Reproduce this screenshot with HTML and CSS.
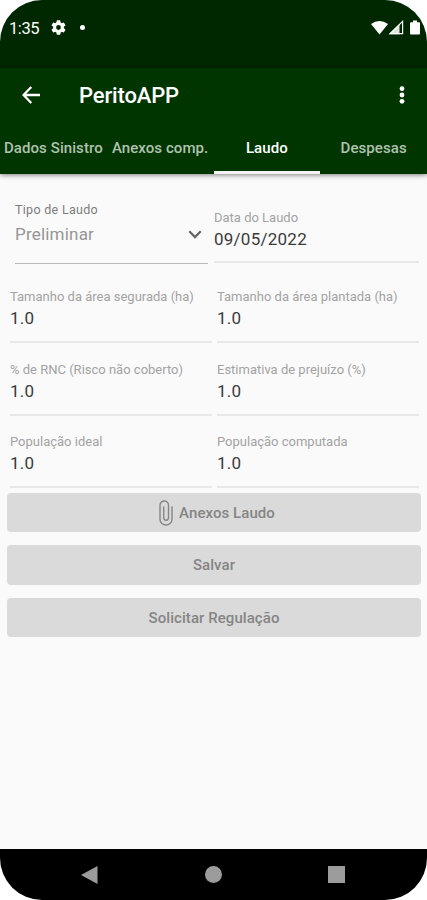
FILE: index.html
```html
<!DOCTYPE html>
<html lang="pt-BR">
<head>
<meta charset="utf-8">
<title>PeritoAPP</title>
<link rel="stylesheet" href="styles.css">
</head>
<body>
<div class="phone">
  <header class="status">
    <span class="clock">1:35</span>
    <svg class="gear" width="15" height="15" viewBox="2 2 20 20"><path fill="#fff" d="M19.14 12.94c.04-.3.06-.61.06-.94s-.02-.64-.07-.94l2.03-1.58a.49.49 0 0 0 .12-.61l-1.92-3.32a.49.49 0 0 0-.59-.22l-2.39.96a7 7 0 0 0-1.62-.94l-.36-2.54a.48.48 0 0 0-.48-.41h-3.84a.48.48 0 0 0-.47.41l-.36 2.54a7 7 0 0 0-1.62.94l-2.39-.96a.49.49 0 0 0-.59.22L2.74 8.87a.48.48 0 0 0 .12.61l2.03 1.58a6 6 0 0 0 0 1.88l-2.03 1.58a.49.49 0 0 0-.12.61l1.92 3.32c.12.22.37.29.59.22l2.39-.96c.5.38 1.03.7 1.62.94l.36 2.54c.05.24.24.41.48.41h3.84c.24 0 .44-.17.47-.41l.36-2.54a7 7 0 0 0 1.62-.94l2.39.96c.22.08.47 0 .59-.22l1.92-3.32a.48.48 0 0 0-.12-.61zM12 15.2a3.2 3.2 0 1 1 0-6.4 3.2 3.2 0 0 1 0 6.4z"/></svg>
    <span class="dot"></span>
    <svg class="signals" width="50" height="16" viewBox="0 0 50 16">
      <path fill="#fff" d="M0 4Q8.5-2 17 4L8.5 14.5z"/>
      <path fill="#dfe5df" d="M18 14.3 28.5 4v10.3z"/>
      <path fill="none" stroke="#fff" stroke-width="1.2" d="M19 13.7 31.6 1.4v12.3z"/>
      <path fill="#fff" d="M40 2.2h2V.4h4v1.8h2q1 0 1 1v10.3q0 1-1 1h-8q-1 0-1-1V3.2q0-1 1-1z"/>
    </svg>
  </header>
  <div class="appbar">
    <div class="toolbar">
      <svg width="18" height="18" viewBox="0 0 18 18"><path fill="none" stroke="#fff" stroke-width="2.3" d="M18 9H1.7M9.3 1 1.5 9l7.8 8"/></svg>
      <h1 class="title">PeritoAPP</h1>
      <svg class="more" width="6" height="20" viewBox="0 0 6 20"><g fill="#fff"><circle cx="3" cy="3.7" r="2.4"/><circle cx="3" cy="10" r="2.4"/><circle cx="3" cy="16.3" r="2.4"/></g></svg>
    </div>
    <nav class="tabs">
      <a class="tab"><span>Dados Sinistro</span></a>
      <a class="tab"><span>Anexos comp.</span></a>
      <a class="tab active"><span>Laudo</span></a>
      <a class="tab"><span>Despesas</span></a>
    </nav>
  </div>
  <main class="content">
    <div class="top-row">
      <div class="select">
        <label>Tipo de Laudo</label>
        <div class="choice"><span>Preliminar</span><svg width="14" height="9" viewBox="0 0 14 9"><path fill="none" stroke="#666" stroke-width="2.2" d="m1.3 1.3 5.7 5.8 5.7-5.8"/></svg></div>
      </div>
      <div class="field date"><label>Data do Laudo</label><span class="value">09/05/2022</span></div>
    </div>
    <div class="grid">
      <div class="field"><label>Tamanho da área segurada (ha)</label><span class="value">1.0</span></div>
      <div class="field"><label>Tamanho da área plantada (ha)</label><span class="value">1.0</span></div>
      <div class="field"><label>% de RNC (Risco não coberto)</label><span class="value">1.0</span></div>
      <div class="field"><label>Estimativa de prejuízo (%)</label><span class="value">1.0</span></div>
      <div class="field"><label>População ideal</label><span class="value">1.0</span></div>
      <div class="field"><label>População computada</label><span class="value">1.0</span></div>
    </div>
    <div class="actions">
      <button class="btn attach"><svg width="14" height="26" viewBox="0 0 14 26"><path fill="none" stroke="#858585" stroke-width="1.4" stroke-linecap="round" d="M13 7v12.2a6 5.8 0 0 1-12 0V5.3a4.2 4.2 0 0 1 8.5 0v12.5a2.4 2.4 0 0 1-4.8 0V7"/></svg>Anexos Laudo</button>
      <button class="btn">Salvar</button>
      <button class="btn">Solicitar Regulação</button>
    </div>
  </main>
  <footer class="navbar">
    <svg width="17" height="18" viewBox="0 0 17 18"><path fill="#9c9c9c" d="M16.5 0v18L0 9z"/></svg>
    <span class="home"></span>
    <span class="recent"></span>
  </footer>
</div>
</body>
</html>
```
FILE: styles.css
```css
* { box-sizing: border-box; }
body { margin: 0; background: #fff; font-family: Roboto, sans-serif; }
.phone {
  width: 427px;
  height: 900px;
  display: flex;
  flex-direction: column;
  overflow: hidden;
  border-radius: 42px;
  background: #fafafa;
}
.status {
  height: 68px;
  padding: 0 6px 13px 9px;
  display: flex;
  align-items: center;
  background: #002800;
  color: #fff;
}
.clock { width: 42px; padding-top: 1px; font-size: 16.5px; letter-spacing: -.4px; }
.dot { width: 5px; height: 5px; margin-left: 14px; border-radius: 50%; background: #fff; }
.signals { margin-left: auto; }
.appbar {
  height: 106px;
  flex: none;
  background: #003500;
  box-shadow: 0 1px 5px rgba(0, 0, 0, .5);
}
.toolbar { height: 54px; display: flex; align-items: center; padding: 0 22px; }
.title { margin: 0 0 0 39px; font-size: 22px; font-weight: 500; letter-spacing: -.15px; color: #fff; }
.more { margin-left: auto; }
.tabs { height: 52px; display: grid; grid-template-columns: repeat(4, 1fr); }
.tab {
  display: flex;
  justify-content: center;
  align-items: center;
  border-bottom: 3px solid transparent;
  padding-top: 2px;
  font-size: 15px;
  font-weight: 500;
  letter-spacing: .08px;
  white-space: nowrap;
  color: #b0c1b0;
}
.tab.active { color: #fff; border-color: #f2f2f2; }
.content { flex: 1; padding: 24px 8px 0 10px; }
.top-row { display: grid; grid-template-columns: 198px 1fr; column-gap: 6px; height: 89px; }
label { display: block; font-size: 13px; line-height: 16px; color: #a3a3a3; white-space: nowrap; }
.select { height: 66px; margin-left: 5px; padding-top: 4px; border-bottom: 1px solid #b8b8b8; }
.select label { font-size: 12.5px; letter-spacing: .3px; color: #7c7c7c; }
.choice {
  display: flex;
  align-items: center;
  justify-content: space-between;
  margin-top: 5px;
  padding-right: 6px;
  font-size: 17px;
  line-height: 22px;
  letter-spacing: .2px;
  color: #959595;
}
.field { height: 56px; border-bottom: 2px solid #e8e8e8; }
.value { display: block; margin-top: 2px; font-size: 17px; line-height: 22px; letter-spacing: .25px; color: #3a3a3a; }
.date { height: 54px; margin-top: 11px; padding-top: 1px; }
.grid { display: grid; grid-template-columns: 202px 202px; column-gap: 5px; row-gap: 16.5px; }
.grid .field { padding-top: 2px; }
.actions { display: flex; flex-direction: column; gap: 13px; margin: 5px -2px 0 -3px; }
.btn {
  display: flex;
  align-items: center;
  justify-content: center;
  height: 39.3px;
  padding: 1px 0 0;
  border: 0;
  border-radius: 4px;
  background: #dadada;
  color: #858585;
  font: 500 15px Roboto, sans-serif;
  letter-spacing: .07px;
}
.attach { padding-left: 6px; }
.btn svg { margin-right: 6px; }
.navbar {
  height: 51px;
  flex: none;
  display: flex;
  align-items: center;
  justify-content: space-between;
  padding: 0 82px 0 81px;
  background: #000;
}
.home { width: 17px; height: 17px; border-radius: 50%; background: #9c9c9c; }
.recent { width: 17px; height: 17px; background: #9c9c9c; }
```
